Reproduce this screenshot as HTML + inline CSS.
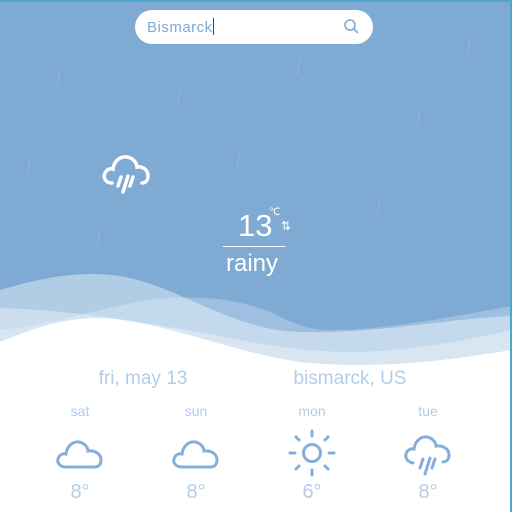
<!DOCTYPE html>
<html><head><style>
html,body{margin:0;padding:0;}
body{width:512px;height:512px;overflow:hidden;position:relative;background:#fff;font-family:"Liberation Sans",sans-serif;}
.sky{position:absolute;left:0;top:0;width:512px;height:512px;background:#7eaad4;}
.topbar{position:absolute;left:0;top:0;width:512px;height:2px;background:#4fa6c9;}
.rbar{position:absolute;right:0;top:0;width:2px;height:512px;background:#4fa6c9;}
.search{position:absolute;left:135px;top:10px;width:238px;height:34px;background:#fff;border-radius:17px;}
.search span{position:absolute;left:12px;top:8px;font-size:15px;color:#7eaad4;letter-spacing:0.5px;}
.caret{display:inline-block;width:1px;height:17px;background:#444;vertical-align:-3px;}
.t{position:absolute;color:#fff;}
.c{position:absolute;color:#b3cde9;text-align:center;}
</style></head><body>
<div class="sky"></div>
<svg style="position:absolute;left:0;top:0" width="512" height="512">
<g stroke="#a8c6e4" stroke-width="1" opacity="0.5">
<line x1="60" y1="70" x2="57" y2="85"/><line x1="180" y1="90" x2="177" y2="105"/><line x1="300" y1="60" x2="297" y2="75"/>
<line x1="420" y1="110" x2="417" y2="125"/><line x1="240" y1="150" x2="237" y2="165"/><line x1="380" y1="200" x2="377" y2="215"/>
<line x1="100" y1="230" x2="97" y2="245"/><line x1="470" y1="40" x2="467" y2="55"/><line x1="30" y1="160" x2="27" y2="175"/>
</g>
<path d="M0,290 C40,278 80,270 120,276 C180,286 230,330 300,332 C380,334 450,318 512,316 L512,512 L0,512Z" fill="#fff" opacity="0.4"/>
<path d="M0,330 C60,325 120,300 170,298 C210,296 240,300 270,312 C300,326 310,330 330,330 C390,330 460,315 512,306 L512,512 L0,512Z" fill="#fff" opacity="0.25"/>
<path d="M0,308 C80,310 160,325 240,340 C320,355 380,360 512,330 L512,512 L0,512Z" fill="#fff" opacity="0.35"/>
<path d="M0,342 C30,330 60,318 100,318 C160,320 230,352 300,362 C380,370 450,360 512,350 L512,512 L0,512Z" fill="#fff"/>
</svg>
<div class="topbar"></div><div class="rbar"></div>
<div class="search"><span>Bismarck<i class="caret"></i></span>
<svg style="position:absolute;left:208px;top:8px" width="18" height="18" fill="none" stroke="#7eaad4" stroke-width="1.6"><circle cx="7" cy="7" r="5"/><line x1="10.5" y1="10.5" x2="15" y2="15"/></svg></div>
<svg style="position:absolute;left:100px;top:150px" width="54" height="46" fill="none" stroke="#fff" stroke-width="3.5" stroke-linecap="round">
<path d="M12,33 C5,33 3,27 5,23 C7,19 11,18 13,19 C14,11 20,6 27,7 C33,8 37,13 37,17 C43,16 48,20 48,26 C48,31 45,33 42,33"/>
<line x1="21" y1="27" x2="18" y2="36"/><line x1="28" y1="26" x2="23" y2="42"/><line x1="33" y1="27" x2="30" y2="36"/>
</svg>
<div class="t" style="left:238px;top:208px;font-size:31px;font-weight:300;">13</div>
<div class="t" style="left:269px;top:207px;font-size:10px;">℃</div>
<div class="t" style="left:281px;top:219px;font-size:12px;">⇅</div>
<div style="position:absolute;left:223px;top:246px;width:62px;height:1px;background:#fff;"></div>
<div class="t" style="left:226px;top:250px;font-size:24px;font-weight:300;">rainy</div>
<div class="c" style="left:78px;top:368px;width:130px;font-size:19px;">fri, may 13</div>
<div class="c" style="left:280px;top:368px;width:140px;font-size:19px;">bismarck, US</div>
<div class="c" style="left:50px;top:403px;width:60px;font-size:14px;">sat</div>
<div class="c" style="left:166px;top:403px;width:60px;font-size:14px;">sun</div>
<div class="c" style="left:282px;top:403px;width:60px;font-size:14px;">mon</div>
<div class="c" style="left:398px;top:403px;width:60px;font-size:14px;">tue</div>
<svg style="position:absolute;left:55px;top:436px" width="50" height="34" fill="none" stroke="#84afdc" stroke-width="3"><path d="M11,31 C4,31 2,26 3,23 C4,19 8,17 11,18 C12,10 18,5 24,6 C30,7 33,12 33,15 C40,14 46,18 46,24 C46,29 43,31 40,31 Z"/></svg>
<svg style="position:absolute;left:171px;top:436px" width="50" height="34" fill="none" stroke="#84afdc" stroke-width="3"><path d="M11,31 C4,31 2,26 3,23 C4,19 8,17 11,18 C12,10 18,5 24,6 C30,7 33,12 33,15 C40,14 46,18 46,24 C46,29 43,31 40,31 Z"/></svg>
<svg style="position:absolute;left:287px;top:428px" width="50" height="50" fill="none" stroke="#84afdc" stroke-width="3" stroke-linecap="round"><circle cx="25" cy="25" r="8.5"/><line x1="25" y1="3" x2="25" y2="8"/><line x1="25" y1="42" x2="25" y2="47"/><line x1="3" y1="25" x2="8" y2="25"/><line x1="42" y1="25" x2="47" y2="25"/><line x1="9" y1="9" x2="12" y2="12"/><line x1="38" y1="38" x2="41" y2="41"/><line x1="41" y1="9" x2="38" y2="12"/><line x1="9" y1="41" x2="12" y2="38"/></svg>
<svg style="position:absolute;left:403px;top:432px" width="54" height="50" fill="none" stroke="#84afdc" stroke-width="3" stroke-linecap="round"><path d="M10,31 C4,30 2,25 3,22 C4,18 8,16 11,17 C12,9 18,4 24,5 C30,6 33,11 33,14 C40,13 46,17 46,23 C46,28 43,30 40,30"/><line x1="20" y1="27" x2="17" y2="36"/><line x1="27" y1="26" x2="22" y2="42"/><line x1="32" y1="27" x2="29" y2="36"/></svg>
<div class="c" style="left:50px;top:481px;width:60px;font-size:20px;">8°</div>
<div class="c" style="left:166px;top:481px;width:60px;font-size:20px;">8°</div>
<div class="c" style="left:282px;top:481px;width:60px;font-size:20px;">6°</div>
<div class="c" style="left:398px;top:481px;width:60px;font-size:20px;">8°</div>
</body></html>
